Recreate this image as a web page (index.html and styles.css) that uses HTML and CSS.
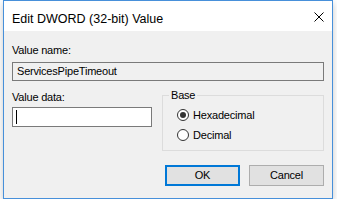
FILE: index.html
```html
<!DOCTYPE html>
<html>
<head>
<meta charset="utf-8">
<title>Edit DWORD (32-bit) Value</title>
<link rel="stylesheet" href="styles.css">
</head>
<body>
<div class="dialog">
  <div class="titlebar">
    <span class="title">Edit DWORD (32-bit) Value</span>
    <svg class="close" width="10" height="10" viewBox="0 0 10 10"><path d="M0.5 0.5L9.5 9.5M9.5 0.5L0.5 9.5" stroke="#000" stroke-width="1"/></svg>
  </div>
  <div class="content">
    <div class="label">Value name:</div>
    <div class="field readonly">ServicesPipeTimeout</div>
    <div class="row">
      <div class="leftcol">
        <div class="label data-label">Value data:</div>
        <div class="field edit"><span class="caret"></span></div>
      </div>
      <fieldset class="group">
        <legend class="legend">Base</legend>
        <div class="radio-row"><span class="radio checked"></span><span class="radio-text">Hexadecimal</span></div>
        <div class="radio-row"><span class="radio"></span><span class="radio-text">Decimal</span></div>
      </fieldset>
    </div>
    <div class="buttons">
      <div class="btn default">OK</div>
      <div class="btn">Cancel</div>
    </div>
  </div>
</div>
</body>
</html>
```
FILE: styles.css
```css
html, body {
  margin: 0;
  padding: 0;
  background: #ffffff;
}
body {
  font-family: "Liberation Sans", Arial, sans-serif;
  font-size: 11px;
  color: #000;
}
.dialog {
  box-sizing: border-box;
  width: 330px;
  height: 199px;
  margin-left: 3px;
  border: 1px solid #4790da;
  background: #f0f0f0;
  box-shadow: 0 3px 7px rgba(0, 0, 0, 0.22);
  display: flex;
  flex-direction: column;
}
.titlebar {
  height: 30px;
  box-sizing: border-box;
  background: #ffffff;
  padding: 10px 8px 0 8px;
  display: flex;
  justify-content: space-between;
  align-items: flex-start;
}
.title {
  font-size: 12.5px;
  line-height: 14px;
  margin-top: 1px;
}
.close {
  display: block;
  margin-top: 1px;
}
.content {
  padding: 13px 8px 0 8px;
  display: flex;
  flex-direction: column;
  letter-spacing: -0.2px;
}
.label {
  line-height: 13px;
  height: 13px;
}
.field {
  box-sizing: border-box;
  border: 1px solid #7a7a7a;
  line-height: 15px;
}
.readonly {
  margin-top: 5px;
  height: 19px;
  padding: 1px 0 0 4px;
  background: #f0f0f0;
}
.row {
  margin-top: 8px;
  display: flex;
  gap: 10px;
}
.leftcol {
  width: 140px;
  display: flex;
  flex-direction: column;
}
.data-label {
  margin-top: 2px;
}
.edit {
  margin-top: 3px;
  height: 20px;
  background: #ffffff;
  padding: 2px 0 0 3px;
}
.caret {
  display: block;
  width: 1px;
  height: 14px;
  background: #000;
}
.group {
  box-sizing: border-box;
  width: 162px;
  margin: 0;
  padding: 3px 6px 5px 6px;
  border: 1px solid #dcdcdc;
  min-width: 0;
}
.legend {
  padding: 0 2px;
  line-height: 13px;
}
.radio-row {
  height: 20px;
  display: flex;
  align-items: center;
  margin-left: 8px;
}
.radio {
  box-sizing: border-box;
  width: 12px;
  height: 12px;
  border: 1px solid #333333;
  border-radius: 50%;
  background: #ffffff;
  display: flex;
  align-items: center;
  justify-content: center;
}
.radio.checked::after {
  content: "";
  width: 6px;
  height: 6px;
  border-radius: 50%;
  background: #333333;
}
.radio-text {
  margin-left: 4px;
  line-height: 13px;
}
.buttons {
  margin-top: 14px;
  display: flex;
  justify-content: flex-end;
  gap: 9px;
}
.btn {
  box-sizing: border-box;
  width: 75px;
  height: 21px;
  background: #e1e1e1;
  border: 1px solid #adadad;
  display: flex;
  align-items: center;
  justify-content: center;
  line-height: 13px;
}
.btn.default {
  border: 2px solid #0078d7;
}
```
